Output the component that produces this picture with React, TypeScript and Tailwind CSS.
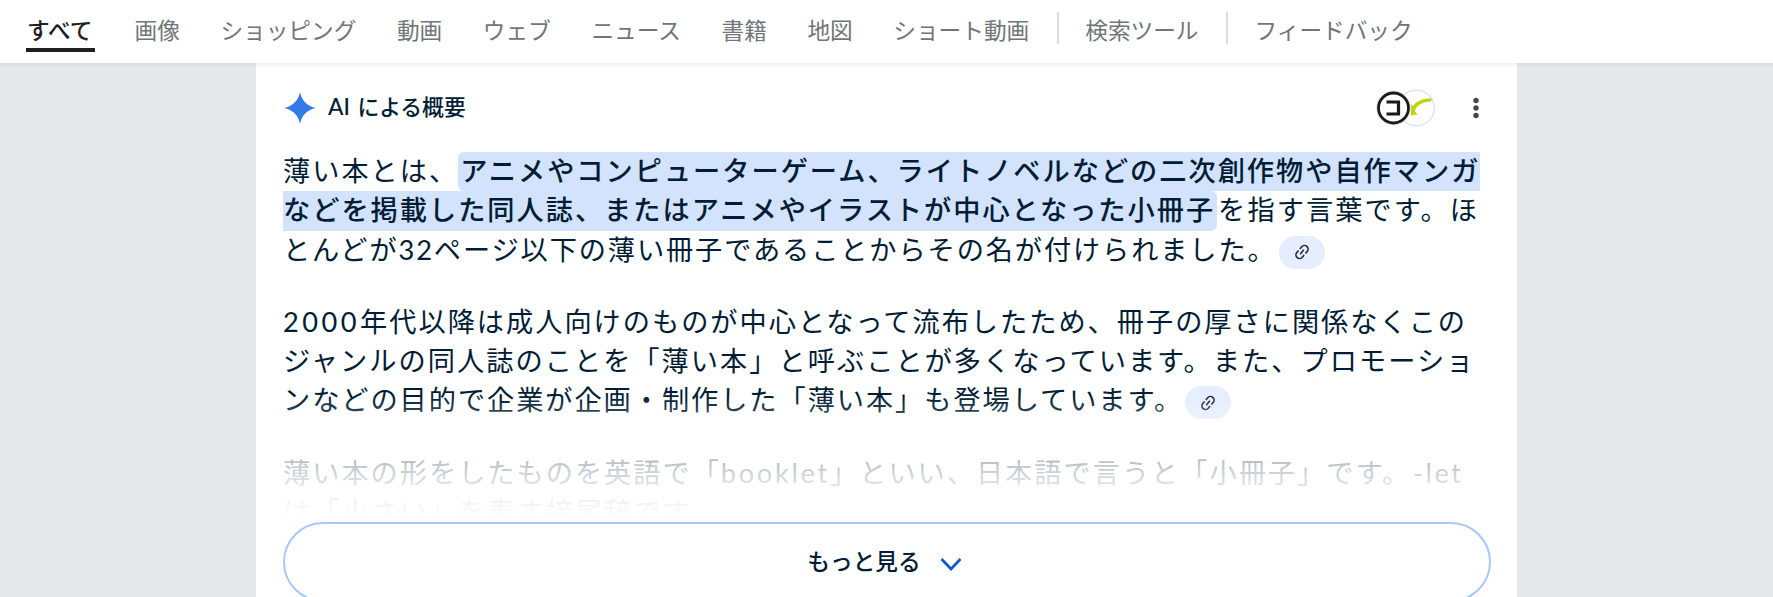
const tabs = ["画像", "ショッピング", "動画", "ウェブ", "ニュース", "書籍", "地図", "ショート動画"];

function LinkChip() {
  return (
    <span className="ml-[2px] mt-[5px] flex h-[33px] w-[46px] items-center justify-center rounded-full bg-[#e5edff]">
      <svg width="16" height="16" viewBox="0 0 16 16" fill="none" stroke="#1f2a3a" strokeWidth="1.6">
        <g transform="rotate(-50 8 8)">
          <path d="M7 4.4H4.2a3.6 3.6 0 0 0 0 7.2H7" />
          <path d="M9 4.4h2.8a3.6 3.6 0 0 1 0 7.2H9" />
          <path d="M5.2 8h5.6" />
        </g>
      </svg>
    </span>
  );
}

function Sparkle() {
  return (
    <svg width="32" height="32" viewBox="0 0 32 32" className="ml-px shrink-0">
      <path d="M16 0C17.6 8.600 23.400 14.400 32 16C23.400 17.600 17.600 23.400 16 32C14.400 23.400 8.600 17.600 0 16C8.600 14.400 14.400 8.600 16 0Z" fill="#3279ea" />
    </svg>
  );
}

function Sources() {
  return (
    <svg width="60" height="38" viewBox="0 0 60 38">
      <circle cx="41.500" cy="19" r="17.800" fill="#fff" stroke="#d3e0fb" strokeWidth="1.200" />
      <path d="M56.500 9.500C49 9 41.500 11.500 38 17L36.500 14.500L35.500 26.500L42.500 25.500L39.800 22C41.500 16.500 47 13 56.500 12.300Z" fill="#c0d315" />
      <circle cx="18.500" cy="19" r="17.500" fill="#e0e8fc" />
      <circle cx="18.500" cy="19" r="15" fill="#fff" stroke="#1b1b1b" strokeWidth="2.800" />
      <path d="M11.500 13H23.500V25H11.500" fill="none" stroke="#1b1b1b" strokeWidth="3.200" />
    </svg>
  );
}

export default function App() {
  return (
    <div className="flex h-[597px] w-[1773px] flex-col overflow-hidden bg-[#e7e8ec] font-['Lato','Noto_Sans_CJK_JP',sans-serif] text-[#001d35]">
      <nav className="relative flex h-[63px] shrink-0 items-start whitespace-nowrap bg-white pl-[26px] text-[22.67px] leading-[34px] text-[#70757a] shadow-[0_1px_5px_rgba(0,0,0,0.09)]">
        <div className="mr-[39.5px] h-[52px] w-[69px] border-b-4 border-[#1f1f1f] pl-px pt-[14px] font-medium text-[#1f1f1f]">すべて</div>
        <div className="flex gap-[40.6px] pt-[14px]">
          {tabs.map((t) => (
            <span key={t}>{t}</span>
          ))}
        </div>
        <div className="ml-[27.5px] mt-3 h-[32px] w-[2px] bg-[#dadce0]" />
        <span className="ml-[26.500px] pt-[14px]">検索ツール</span>
        <div className="ml-[27px] mt-3 h-[32px] w-[2px] bg-[#dadce0]" />
        <span className="ml-[27px] pt-[14px]">フィードバック</span>
      </nav>

      <main className="ml-[256px] h-[534px] w-[1261px] bg-white px-[27px]">
        <header className="flex h-[89px] items-center">
          <Sparkle />
          <h2 className="ml-[12px] pb-[2px] text-[21.8px] font-medium">
            <span className="mr-[2px] text-[22.67px]">AI</span> による概要
          </h2>
          <div className="ml-auto">
            <Sources />
          </div>
          <svg width="8" height="24" viewBox="0 0 8 24" className="ml-[37px] mr-[10px]" fill="#444746">
            <circle cx="4" cy="4.500" r="2.700" />
            <circle cx="4" cy="12" r="2.700" />
            <circle cx="4" cy="19.500" r="2.700" />
          </svg>
        </header>

        <div className="relative h-[366px] overflow-hidden whitespace-nowrap text-[27.2px] leading-[37.500px] tracking-[2px]">
          <div className="flex h-[39.300px]">
            <span>薄い本とは、</span>
            <b className="rounded-l-md bg-[#d3e3fd] pl-[2px] font-medium">アニメやコンピューターゲーム、ライトノベルなどの二次創作物や自作マンガ</b>
          </div>
          <div className="flex h-[39.300px]">
            <b className="rounded-r-md bg-[#d3e3fd] pr-[2px] font-medium">などを掲載した同人誌、またはアニメやイラストが中心となった小冊子</b>
            <span className="pl-px tracking-[2.100px]">を指す言葉です。ほ</span>
          </div>
          <div className="flex h-[39.300px]">
            <span className="tracking-[1.900px]">とんどが32ページ以下の薄い冊子であることからその名が付けられました。</span>
            <LinkChip />
          </div>
          <div className="mt-[33px] h-[39.300px]">
            <span className="tracking-[3.500px]">2000</span>年代以降は成人向けのものが中心となって流布したため、冊子の厚さに関係なくこの
          </div>
          <div className="h-[39.300px] tracking-[2.040px]">ジャンルの同人誌のことを「薄い本」と呼ぶことが多くなっています。また、プロモーショ</div>
          <div className="flex h-[39.300px]">
            <span className="tracking-[1.960px]">ンなどの目的で企業が企画・制作した「薄い本」も登場しています。</span>
            <LinkChip />
          </div>
          <div className="mt-[33px] h-[39.300px]">
            薄い本の形をしたものを英語で「<span className="tracking-[2.700px]">booklet</span>」といい、日本語で言うと「小冊子」です。<span className="ml-[2px] tracking-[2.400px]">-let</span>
          </div>
          <div className="h-[39.300px]">は「小さい」を表す接尾辞です。</div>
          {/* fades the cut-off text out above the button */}
          <div className="absolute inset-x-0 bottom-0 h-[122px] bg-[linear-gradient(to_bottom,rgba(255,255,255,0),rgba(255,255,255,0.70)_50%,rgba(255,255,255,0.88)_73%,rgba(255,255,255,0.95)_88%,white)]" />
        </div>

        <button className="mt-[4px] flex h-[80px] w-[1208px] items-center justify-center rounded-full border-2 border-[#a8c7fa] bg-white pr-[5px] text-[22.67px] font-medium">
          もっと見る
          <svg width="22" height="15" viewBox="0 0 22 15" className="ml-[19px] mt-1" fill="none" stroke="#0b57d0" strokeWidth="2.600">
            <path d="M1.500 2L11 12L20.500 2" />
          </svg>
        </button>
      </main>
    </div>
  );
}
